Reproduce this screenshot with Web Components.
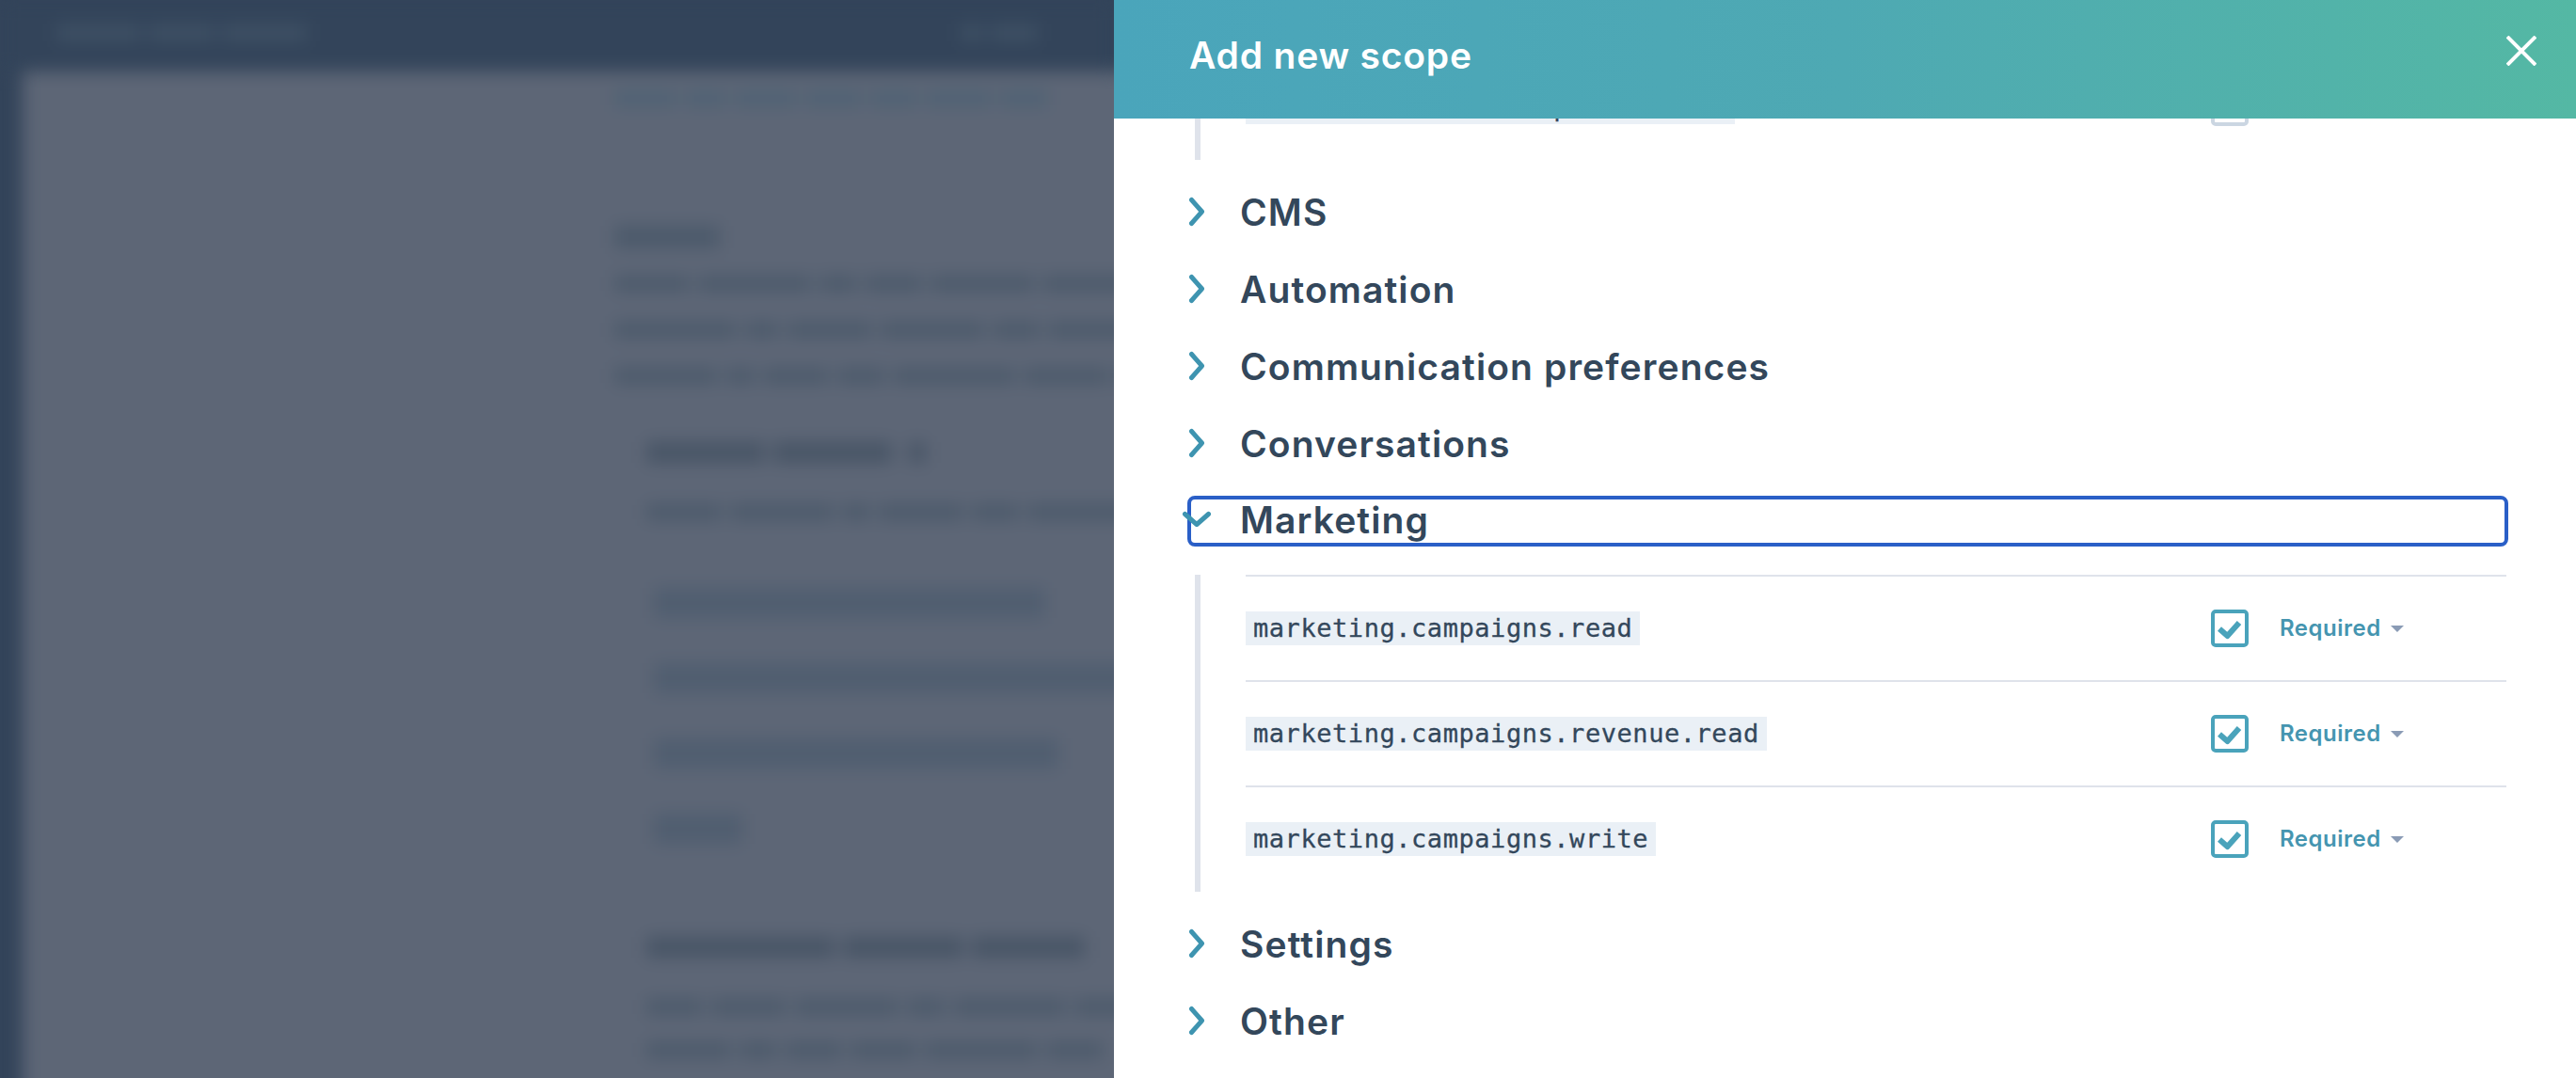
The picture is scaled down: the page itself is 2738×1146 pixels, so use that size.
<!DOCTYPE html>
<html>
<head>
<meta charset="utf-8">
<style>
    html, body { margin: 0; height: 100%; overflow: hidden; }
    body { display: flex; font-family: Inter, "Liberation Sans", sans-serif; color: #33475b; }
</style>
</head>
<body>
<scope-backdrop></scope-backdrop>
<scope-panel heading="Add new scope">
    <scope-list style="margin-top:-69px;padding-bottom:2px">
        <scope-row code="crm.schemas.subscriptions.read" muted></scope-row>
    </scope-list>
    <scope-group label="CMS"></scope-group>
    <scope-group label="Automation"></scope-group>
    <scope-group label="Communication preferences"></scope-group>
    <scope-group label="Conversations"></scope-group>
    <scope-group label="Marketing" open style="margin-top:-1px">
        <scope-row code="marketing.campaigns.read"></scope-row>
        <scope-row code="marketing.campaigns.revenue.read"></scope-row>
        <scope-row code="marketing.campaigns.write"></scope-row>
    </scope-group>
    <scope-group label="Settings" style="margin-top:2px"></scope-group>
    <scope-group label="Other"></scope-group>
</scope-panel>

<script>
/**
 * <blur-line> — one row of word shaped smudges for the page behind the panel.
 */
class BlurLine extends HTMLElement {
    constructor() {
        super();
        this.attachShadow({ mode: 'open' });
    }

    connectedCallback() {
        const words = (this.getAttribute('words') || '').split(',');
        const bars = words.map((w) => `<i style="width:${w}px"></i>`).join('');
        this.shadowRoot.innerHTML = `
            <style>
                :host {
                    display: flex;
                    gap: var(--word-gap, 9px);
                    height: var(--line-height, 17px);
                }
                i { display: block; flex: none; background: var(--line-color, #4c5a6b); }
            </style>
            ${bars}
        `;
    }
}

/**
 * <scope-backdrop> — the dimmed, blurred settings page left of the panel.
 */
class ScopeBackdrop extends HTMLElement {
    constructor() {
        super();
        this.attachShadow({ mode: 'open' });
    }

    connectedCallback() {
        this.shadowRoot.innerHTML = `
            <style>
                :host {
                    display: block;
                    flex: none;
                    width: 1184px;
                    height: 100%;
                    overflow: hidden;
                    background: #33445a;
                }
                .frame { filter: blur(9px); height: 100%; }
                .top {
                    display: flex;
                    align-items: center;
                    height: 76px;
                    box-sizing: border-box;
                    padding: 0 0 6px 60px;
                    background: #33445a;
                    --line-color: #3e5064;
                    --line-height: 18px;
                    --word-gap: 8px;
                }
                .top .right { margin-left: 695px; }
                .page {
                    display: flow-root;
                    height: 1200px;
                    margin: 0 -40px 0 24px;
                    padding-left: 629px;
                    background: #5d6676;
                }
                .link { --line-color: #4f6274; --line-height: 17px; margin-top: 20px; }
                .title { --line-height: 24px; margin-top: 127px; }
                .text { margin-top: 32px; }
                .text.first { margin-top: 29px; }
                .sub { --line-height: 22px; margin: 62px 0 0 34px; --line-color: #485566; }
                .desc { margin: 44px 0 0 34px; }
                .code { --line-height: 32px; --word-gap: 0px; margin: 72px 0 0 42px; --line-color: #505e70; }
                .code + .code { margin-top: 48px; }
                .cond { --line-height: 22px; margin: 99px 0 0 34px; --line-color: #485566; }
                .desc2 { margin: 44px 0 0 34px; }
                .desc2 + .desc2 { margin-top: 29px; }
            </style>
            <div class="frame">
                <div class="top">
                    <blur-line words="90,70,90"></blur-line>
                    <blur-line class="right" words="24,50"></blur-line>
                </div>
                <div class="page">
                    <blur-line class="link" words="66,44,66,60,50,70,50"></blur-line>
                    <blur-line class="title" words="112"></blur-line>
                    <blur-line class="text first" words="80,120,40,60,110,90,100"></blur-line>
                    <blur-line class="text" words="130,36,90,110,50,100,80"></blur-line>
                    <blur-line class="text" words="110,30,70,50,130,90,80"></blur-line>
                    <blur-line class="sub" words="126,126,0,18"></blur-line>
                    <blur-line class="desc" words="80,110,30,90,50,120"></blur-line>
                    <blur-line class="code" words="415"></blur-line>
                    <blur-line class="code" words="560"></blur-line>
                    <blur-line class="code" words="430"></blur-line>
                    <blur-line class="code" words="94"></blur-line>
                    <blur-line class="cond" words="200,128,120"></blur-line>
                    <blur-line class="desc2" words="60,80,110,40,120,90"></blur-line>
                    <blur-line class="desc2" words="90,40,60,70,120,60"></blur-line>
                </div>
            </div>
        `;
    }
}

/**
 * <scope-panel> — right hand slide-in with gradient header, close button, body slot.
 */
class ScopePanel extends HTMLElement {
    constructor() {
        super();
        this.attachShadow({ mode: 'open' });
    }

    connectedCallback() {
        this.shadowRoot.innerHTML = `
            <style>
                :host {
                    display: flex;
                    flex-direction: column;
                    flex: 1;
                    height: 100%;
                    min-width: 0;
                    background: #fff;
                }
                header {
                    display: flex;
                    align-items: center;
                    justify-content: space-between;
                    flex: none;
                    position: relative;
                    z-index: 1;
                    height: 126px;
                    box-sizing: border-box;
                    padding: 0 42px 18px 80px;
                    background: linear-gradient(90deg, #4aa5bb, #4ea9b3 50%, #54b8a4);
                    color: #fff;
                    font-size: 39px;
                    font-weight: 600;
                    letter-spacing: 0.8px;
                }
                h1 { margin: 8px 0 0; font: inherit; }
                svg { display: block; }
                .body {
                    display: flex;
                    flex-direction: column;
                    gap: 28px;
                    flex: 1;
                    min-height: 0;
                    overflow: hidden;
                    padding: 0 72px 0 78px;
                }
            </style>
            <header>
                <h1>${this.getAttribute('heading') || ''}</h1>
                <svg width="32" height="32" viewBox="0 0 32 32" fill="none" stroke="#fff" stroke-width="4">
                    <path d="M1 1 31 31M31 1 1 31"/>
                </svg>
            </header>
            <div class="body"><slot></slot></div>
        `;
    }
}

/**
 * <scope-group> — collapsible category heading, open groups show their scope rows.
 */
class ScopeGroup extends HTMLElement {
    constructor() {
        super();
        this.attachShadow({ mode: 'open' });
    }

    connectedCallback() {
        const open = this.hasAttribute('open');
        this.shadowRoot.innerHTML = `
            <style>
                :host { display: block; }
                .head {
                    display: flex;
                    align-items: center;
                    height: 54px;
                    box-sizing: border-box;
                    padding-left: 2px;
                    border-radius: 8px;
                    font-size: 39px;
                    font-weight: 600;
                    letter-spacing: 1.1px;
                }
                .head span { margin-bottom: 3px; }
                :host([open]) .head { outline: 4px solid #2a5fc7; outline-offset: -4px; }
                svg {
                    flex: none;
                    width: 16px;
                    height: 30px;
                    margin: 0 38px 5px 0;
                    overflow: visible;
                }
                :host([open]) svg { transform: rotate(90deg); }
                scope-list { margin-top: 30px; }
            </style>
            <div class="head">
                <svg viewBox="0 0 16 30" fill="none" stroke="#3e94b0" stroke-width="5" stroke-linecap="round" stroke-linejoin="round">
                    <path d="M2.5 2.5 13.5 15 2.5 27.5"/>
                </svg>
                <span>${this.getAttribute('label') || ''}</span>
            </div>
            ${open ? '<scope-list><slot></slot></scope-list>' : ''}
        `;
    }
}

/**
 * <scope-list> — indented rows with the grey bar down the left side.
 */
class ScopeList extends HTMLElement {
    constructor() {
        super();
        this.attachShadow({ mode: 'open' });
    }

    connectedCallback() {
        this.shadowRoot.innerHTML = `
            <style>
                :host {
                    display: block;
                    margin-left: 8px;
                    margin-right: 2px;
                }
                .bar {
                    border-left: 6px solid #dfe3eb;
                    padding: 0 0 1px 48px;
                }
            </style>
            <div class="bar"><slot></slot></div>
        `;
    }
}

/**
 * <scope-row> — code chip on the left, checkbox and requirement dropdown on the right.
 */
class ScopeRow extends HTMLElement {
    constructor() {
        super();
        this.attachShadow({ mode: 'open' });
    }

    connectedCallback() {
        const muted = this.hasAttribute('muted');
        const mark = muted ? '' : '<svg viewBox="0 0 32 32" fill="none" stroke="#4aa3bb" stroke-width="6" stroke-linejoin="round"><path d="M5 16.5 13.5 24 26 10"/></svg>';
        const dropdown = muted ? '' : `
            <span class="required">Required</span>
            <span class="caret"></span>
        `;
        this.shadowRoot.innerHTML = `
            <style>
                :host {
                    display: flex;
                    align-items: center;
                    height: 112px;
                    box-sizing: border-box;
                    border-top: 2px solid #dfe3eb;
                }
                code {
                    flex: none;
                    padding: 0 8px;
                    line-height: 36px;
                    background: #eaf0f6;
                    color: #33475b;
                    font-family: "DejaVu Sans Mono", "Liberation Mono", monospace;
                    font-size: 27px;
                    letter-spacing: 0.55px;
                    -webkit-text-stroke: 0.3px #33475b;
                }
                .actions {
                    display: flex;
                    align-items: center;
                    width: 314px;
                    margin-left: auto;
                }
                .check {
                    flex: none;
                    width: 40px;
                    height: 40px;
                    box-sizing: border-box;
                    border: 4px solid ${muted ? '#cbd6e2' : '#4aa3bb'};
                    border-radius: 5px;
                }
                .check svg { display: block; }
                .required {
                    margin: 0 0 2px 33px;
                    color: #4595b0;
                    font-size: 24px;
                    font-weight: 600;
                    letter-spacing: 0.5px;
                }
                .caret {
                    margin-left: 10px;
                    border: 7px solid transparent;
                    border-top-color: #8a9bb5;
                    border-bottom: 0;
                }
            </style>
            <code>${this.getAttribute('code') || ''}</code>
            <div class="actions">
                <div class="check">${mark}</div>
                ${dropdown}
            </div>
        `;
    }
}

customElements.define('blur-line', BlurLine);
customElements.define('scope-backdrop', ScopeBackdrop);
customElements.define('scope-panel', ScopePanel);
customElements.define('scope-group', ScopeGroup);
customElements.define('scope-list', ScopeList);
customElements.define('scope-row', ScopeRow);
</script>
</body>
</html>
